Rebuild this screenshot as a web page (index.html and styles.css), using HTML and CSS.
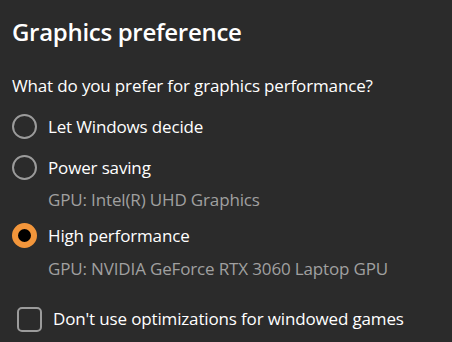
FILE: index.html
```html
<!DOCTYPE html>
<html>
<head>
<meta charset="utf-8">
<link rel="stylesheet" href="styles.css">
</head>
<body>
<div class="panel">
  <h1 class="title">Graphics preference</h1>
  <p class="question">What do you prefer for graphics performance?</p>
  <div class="row row-first">
    <span class="radio"></span>
    <span class="label">Let Windows decide</span>
  </div>
  <div class="row row-second">
    <span class="radio"></span>
    <span class="label">Power saving</span>
  </div>
  <div class="sub sub-first">GPU: Intel(R) UHD Graphics</div>
  <div class="row row-third">
    <span class="radio radio-on"></span>
    <span class="label">High performance</span>
  </div>
  <div class="sub sub-second">GPU: NVIDIA GeForce RTX 3060 Laptop GPU</div>
  <div class="row row-check">
    <span class="check"></span>
    <span class="label">Don't use optimizations for windowed games</span>
  </div>
</div>
</body>
</html>
```
FILE: styles.css
```css
html, body {
  margin: 0;
  padding: 0;
  background: #2b2b2b;
  height: 100%;
}
body {
  font-family: "Open Sans", "Noto Sans", sans-serif;
  color: #ffffff;
  overflow: hidden;
}
.panel {
  padding: 16px 12px 0 12px;
  display: flex;
  flex-direction: column;
}
.title {
  margin: 0;
  font-size: 24px;
  font-weight: 600;
  letter-spacing: -0.3px;
  line-height: 32px;
}
.question {
  margin: 26px 0 0 0;
  font-size: 17px;
  letter-spacing: -0.15px;
  line-height: 24px;
}
.row {
  display: flex;
  align-items: center;
  height: 26px;
  gap: 11px;
}
.label {
  font-size: 17px;
  letter-spacing: -0.15px;
  line-height: 24px;
  padding-top: 2px;
}
.row-first { margin-top: 15px; }
.row-second { margin-top: 15px; }
.row-third { margin-top: 10px; }
.row-check { margin-top: 24px; padding-left: 5px; }
.sub {
  font-size: 17px;
  letter-spacing: -0.15px;
  line-height: 24px;
  color: #a0a0a0;
  padding-left: 36px;
}
.sub-first { margin-top: 8px; }
.sub-second { margin-top: 9px; }
.radio {
  box-sizing: border-box;
  width: 25px;
  height: 25px;
  border-radius: 50%;
  border: 2px solid #9b9b9b;
  flex: none;
}
.radio-on {
  border: 6px solid #f3963b;
  background: #000000;
}
.check {
  box-sizing: border-box;
  width: 25px;
  height: 25px;
  border-radius: 5px;
  border: 2px solid #9b9b9b;
  flex: none;
  position: relative;
  top: 1px;
}
```
